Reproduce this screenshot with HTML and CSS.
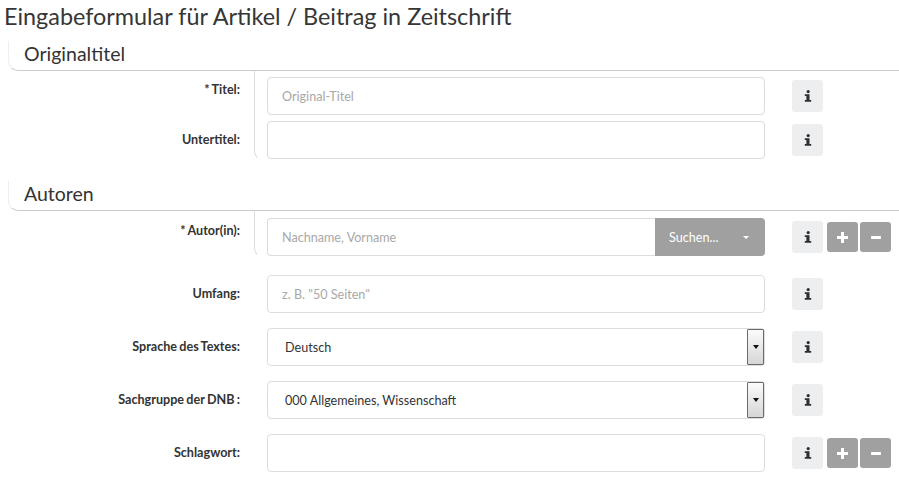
FILE: index.html
```html
<!DOCTYPE html>
<html lang="de">
<head>
<meta charset="utf-8">
<title>Eingabeformular</title>
<link rel="stylesheet" href="styles.css">
</head>
<body>
<div class="page">
  <h1 class="title">Eingabeformular für Artikel / Beitrag in Zeitschrift</h1>

  <section class="section s1">
    <h2 class="sec-head">Originaltitel</h2>
    <div class="group">
      <div class="labels">
        <label class="lbl req">* Titel:</label>
        <label class="lbl">Untertitel:</label>
      </div>
      <div class="fields bracket">
        <div class="frow">
          <input class="inp" placeholder="Original-Titel">
          <button class="btn info"><svg width="8" height="12" viewBox="0 0 8 12"><circle cx="4.2" cy="1.6" r="1.6"/><path d="M0.8 4.2H5.5V10H7.2V11.8H0.8V10H2.4V6H0.8Z"/></svg></button>
        </div>
        <div class="frow">
          <input class="inp">
          <button class="btn info"><svg width="8" height="12" viewBox="0 0 8 12"><circle cx="4.2" cy="1.6" r="1.6"/><path d="M0.8 4.2H5.5V10H7.2V11.8H0.8V10H2.4V6H0.8Z"/></svg></button>
        </div>
      </div>
    </div>
  </section>

  <section class="section s2">
    <h2 class="sec-head">Autoren</h2>
    <div class="group">
      <div class="labels">
        <label class="lbl req">* Autor(in):</label>
      </div>
      <div class="fields bracket tight">
        <div class="frow">
          <div class="inpgroup">
            <input class="inp grow" placeholder="Nachname, Vorname">
            <button class="suchen"><span>Suchen...</span><span class="caret"></span></button>
          </div>
          <button class="btn info"><svg width="8" height="12" viewBox="0 0 8 12"><circle cx="4.2" cy="1.6" r="1.6"/><path d="M0.8 4.2H5.5V10H7.2V11.8H0.8V10H2.4V6H0.8Z"/></svg></button>
          <button class="btn grey plus"><svg width="11" height="11" viewBox="0 0 11 11"><path d="M4 0h3v4h4v3H7v4H4V7H0V4h4z"/></svg></button>
          <button class="btn grey minus"><svg width="10" height="3" viewBox="0 0 10 3"><rect width="10" height="3"/></svg></button>
        </div>
      </div>
    </div>

    <div class="group plain">
      <div class="labels">
        <label class="lbl">Umfang:</label>
        <label class="lbl">Sprache des Textes:</label>
        <label class="lbl">Sachgruppe der DNB :</label>
        <label class="lbl">Schlagwort:</label>
      </div>
      <div class="fields">
        <div class="frow">
          <input class="inp" placeholder="z. B. &quot;50 Seiten&quot;">
          <button class="btn info"><svg width="8" height="12" viewBox="0 0 8 12"><circle cx="4.2" cy="1.6" r="1.6"/><path d="M0.8 4.2H5.5V10H7.2V11.8H0.8V10H2.4V6H0.8Z"/></svg></button>
        </div>
        <div class="frow">
          <div class="inp select">
            <select><option>Deutsch</option></select>
            <span class="arrow"></span>
          </div>
          <button class="btn info"><svg width="8" height="12" viewBox="0 0 8 12"><circle cx="4.2" cy="1.6" r="1.6"/><path d="M0.8 4.2H5.5V10H7.2V11.8H0.8V10H2.4V6H0.8Z"/></svg></button>
        </div>
        <div class="frow">
          <div class="inp select">
            <select><option>000 Allgemeines, Wissenschaft</option></select>
            <span class="arrow"></span>
          </div>
          <button class="btn info"><svg width="8" height="12" viewBox="0 0 8 12"><circle cx="4.2" cy="1.6" r="1.6"/><path d="M0.8 4.2H5.5V10H7.2V11.8H0.8V10H2.4V6H0.8Z"/></svg></button>
        </div>
        <div class="frow">
          <input class="inp">
          <button class="btn info"><svg width="8" height="12" viewBox="0 0 8 12"><circle cx="4.2" cy="1.6" r="1.6"/><path d="M0.8 4.2H5.5V10H7.2V11.8H0.8V10H2.4V6H0.8Z"/></svg></button>
          <button class="btn grey plus"><svg width="11" height="11" viewBox="0 0 11 11"><path d="M4 0h3v4h4v3H7v4H4V7H0V4h4z"/></svg></button>
          <button class="btn grey minus"><svg width="10" height="3" viewBox="0 0 10 3"><rect width="10" height="3"/></svg></button>
        </div>
      </div>
    </div>
  </section>
</div>
</body>
</html>
```
FILE: styles.css
```css
html, body {
  margin: 0;
  background: #fff;
}
body {
  font-family: Lato, "Open Sans", sans-serif;
  color: #333;
  overflow: hidden;
}
.page {
  padding: 3px 0 0 4px;
}
.title {
  margin: 0;
  font-size: 23.4px;
  line-height: 26px;
  font-weight: 400;
  color: #363636;
  white-space: nowrap;
}
.section {
  margin-left: 4px;
}
.sec-head {
  margin: 12px 0 0;
  font-size: 19.5px;
  line-height: 24px;
  font-weight: 400;
  color: #333;
  padding: 1px 0 4px 15px;
  border-bottom: 1px solid #ccc;
  border-left: 1px solid #eee;
  border-bottom-left-radius: 10px;
}
.s2 .sec-head {
  margin-top: 20px;
}
.group {
  display: flex;
}
.labels {
  width: 246px;
  flex: none;
  display: flex;
  flex-direction: column;
  gap: 6px;
  padding: 6px 0 2px;
}
.fields {
  flex: 1;
  display: flex;
  flex-direction: column;
  gap: 6px;
  padding: 6px 0 1px 12px;
  border-left: 1px solid transparent;
  border-bottom: 1px solid transparent;
}
.fields.bracket {
  border-left-color: #ddd;
  border-bottom-left-radius: 10px;
}
.tight, .s2 .labels {
  padding-top: 7px;
}
.plain {
  margin-top: 17px;
}
.plain .labels {
  padding-top: 0;
  gap: 15px;
}
.plain .fields {
  padding-top: 0;
  gap: 15px;
}
.lbl {
  display: block;
  height: 38px;
  line-height: 38px;
  text-align: right;
  padding-right: 14px;
  font-weight: 700;
  font-size: 12.6px;
  word-spacing: -0.8px;
  color: #333;
  white-space: nowrap;
}
.lbl.req {
  line-height: 26px;
}
.frow {
  display: flex;
  align-items: center;
  height: 38px;
}
.inp {
  width: 498px;
  height: 38px;
  box-sizing: border-box;
  border: 1px solid #ddd;
  border-radius: 4px;
  padding: 0 14px;
  font: 12.6px Lato, sans-serif;
  color: #333;
  background: #fff;
  outline: none;
  flex: none;
}
.inp::placeholder {
  color: #a8a8a8;
}
.inpgroup {
  display: flex;
  width: 498px;
  flex: none;
}
.inp.grow {
  flex: 1;
  width: auto;
  min-width: 0;
  border-radius: 4px 0 0 4px;
  border-right: none;
}
.suchen {
  width: 110px;
  height: 38px;
  flex: none;
  border: none;
  border-radius: 0 4px 4px 0;
  background: #a0a0a0;
  color: #fff;
  font: 12.6px Lato, sans-serif;
  display: flex;
  align-items: center;
  justify-content: space-between;
  padding: 0 16px 0 14px;
}
.caret {
  width: 0;
  height: 0;
  border-left: 3px solid transparent;
  border-right: 3px solid transparent;
  border-top: 3px solid #fff;
}
.select {
  display: flex;
  align-items: stretch;
  padding: 0;
}
.select select {
  flex: 1;
  appearance: none;
  -webkit-appearance: none;
  border: none;
  background: transparent;
  font: 12.6px Lato, sans-serif;
  color: #333;
  padding: 0 0 0 17px;
  outline: none;
}
.arrow {
  width: 15px;
  flex: none;
  border: 1px solid #6a6a6a;
  border-radius: 1px;
  background: linear-gradient(#fbfbfb, #d6d6d6);
  display: flex;
  align-items: center;
  justify-content: center;
}
.arrow::after {
  content: "";
  width: 0;
  height: 0;
  border-left: 3.5px solid transparent;
  border-right: 3.5px solid transparent;
  border-top: 4px solid #111;
}
.btn {
  border: none;
  padding: 0;
  display: flex;
  align-items: center;
  justify-content: center;
  flex: none;
  border-radius: 3px;
}
.btn.info {
  margin-left: 27px;
  width: 31px;
  height: 32px;
  background: #eceef0;
  fill: #2f2f2f;
}
.btn.grey {
  width: 31px;
  height: 30px;
  background: #a0a0a0;
  fill: #fff;
}
.btn.plus {
  margin-left: 4px;
}
.btn.minus {
  margin-left: 2px;
}
```
